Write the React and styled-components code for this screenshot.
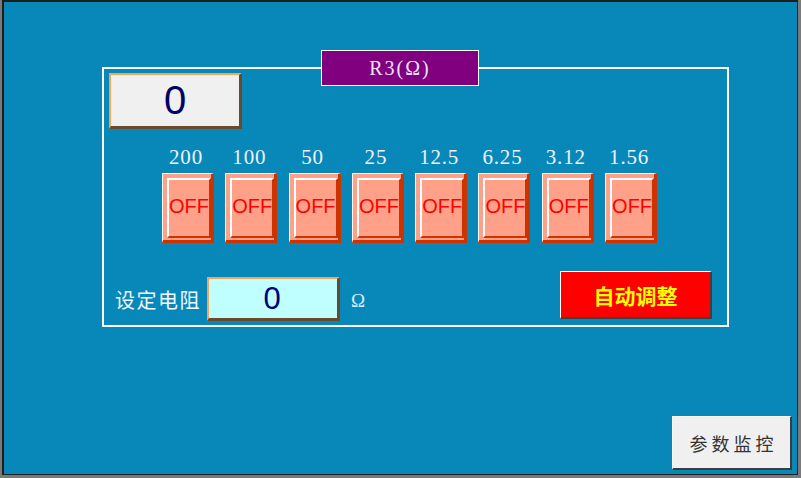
import styled, { createGlobalStyle } from "styled-components";

const GlobalStyle = createGlobalStyle`
  html, body {
    margin: 0;
    padding: 0;
    background: #7a7a7a;
  }
  * {
    box-sizing: border-box;
  }
`;

const weights = ["200", "100", "50", "25", "12.5", "6.25", "3.12", "1.56"];

export default function App() {
  return (
    <>
      <GlobalStyle />
      <Frame>
        <Screen>
          <GroupBox>
            <GroupTitle>R3(Ω)</GroupTitle>
            <ValueDisplay>0</ValueDisplay>
            <SwitchGrid>
              {weights.map((w) => (
                <SwitchCol key={w}>
                  <WeightLabel>{w}</WeightLabel>
                  <ToggleButton>
                    <ToggleFace>OFF</ToggleFace>
                  </ToggleButton>
                </SwitchCol>
              ))}
            </SwitchGrid>
            <BottomRow>
              <SetGroup>
                <SetLabel>设定电阻</SetLabel>
                <SetInput>0</SetInput>
                <Unit>Ω</Unit>
              </SetGroup>
              <AutoButton>自动调整</AutoButton>
            </BottomRow>
          </GroupBox>
          <Footer>
            <MonitorButton>参数监控</MonitorButton>
          </Footer>
        </Screen>
      </Frame>
    </>
  );
}

const Frame = styled.div`
  width: 801px;
  height: 478px;
  padding: 0 3px 3px 2px;
  background: #7a7a7a;
  display: flex;
`;

const Screen = styled.div`
  flex: 1;
  display: flex;
  flex-direction: column;
  background: #0788b8;
  border-style: solid;
  border-color: #1e1e1e;
  border-width: 2px 1px 1px 2px;
`;

const GroupBox = styled.div`
  position: relative;
  width: 627px;
  height: 260px;
  margin: 65px 0 0 98px;
  padding: 4px 0 0 5px;
  border: 2px solid #ffffff;
  display: flex;
  flex-direction: column;
`;

const GroupTitle = styled.div`
  position: absolute;
  left: 217px;
  top: -19px;
  width: 158px;
  height: 36px;
  background: #800080;
  border: 1px solid #ffffff;
  color: #ece4ff;
  font-family: "Liberation Serif", serif;
  font-size: 20px;
  letter-spacing: 2px;
  display: flex;
  align-items: center;
  justify-content: center;
`;

const ValueDisplay = styled.div`
  width: 133px;
  height: 56px;
  background: #f0f0f0;
  border-style: solid;
  border-width: 2px 3px 3px 2px;
  border-color: #f5a55a #6b4a2a #6b4a2a #f5a55a;
  color: #000066;
  font-family: "Liberation Sans", Arial, sans-serif;
  font-size: 40px;
  display: flex;
  align-items: center;
  justify-content: center;
`;

const SwitchGrid = styled.div`
  display: grid;
  grid-template-columns: repeat(8, 52px);
  column-gap: 11.3px;
  margin: 17px 0 0 53px;
`;

const SwitchCol = styled.div`
  display: flex;
  flex-direction: column;
  align-items: center;
`;

const WeightLabel = styled.div`
  height: 22px;
  line-height: 22px;
  margin-left: -4px;
  color: #eef2ff;
  font-family: "Liberation Serif", serif;
  font-size: 21px;
  letter-spacing: 0.8px;
  white-space: nowrap;
`;

const ToggleButton = styled.div`
  width: 52px;
  height: 70px;
  margin-top: 5px;
  padding: 4px 1px 2px 4px;
  background: #ffa088;
  border-style: solid;
  border-width: 1px 3px 3px 1px;
  border-color: #ffffff #cc3300 #cc3300 #ffffff;
  display: flex;
`;

const ToggleFace = styled.div`
  flex: 1;
  border-style: solid;
  border-width: 2px;
  border-color: #ffffff #cc3300 #cc3300 #ffffff;
  color: #ff0000;
  font-family: "Liberation Sans", Arial, sans-serif;
  font-size: 20px;
  display: flex;
  align-items: center;
  justify-content: center;
  padding-bottom: 3px;
`;

const BottomRow = styled.div`
  display: flex;
  align-items: flex-start;
  margin-top: 28px;
`;

const SetGroup = styled.div`
  display: flex;
  align-items: center;
  margin-top: 6px;
`;

const SetLabel = styled.div`
  margin-left: 6px;
  color: #f4f8ff;
  font-family: "Noto Sans CJK SC", sans-serif;
  font-size: 20px;
  letter-spacing: 1.5px;
`;

const SetInput = styled.div`
  width: 133px;
  height: 44px;
  margin-left: 6px;
  background: #c0ffff;
  border-style: solid;
  border-width: 2px 3px 3px 2px;
  border-color: #f5a55a #6b4a2a #6b4a2a #f5a55a;
  color: #000080;
  font-family: "Liberation Sans", Arial, sans-serif;
  font-size: 31px;
  padding-right: 2px;
  display: flex;
  align-items: center;
  justify-content: center;
`;

const Unit = styled.div`
  margin: 4px 0 0 11px;
  color: #d8ecff;
  font-family: "Liberation Serif", serif;
  font-size: 19px;
`;

const AutoButton = styled.div`
  width: 152px;
  height: 48px;
  margin: 0 15px 0 auto;
  background: #ff0000;
  border-style: solid;
  border-width: 1px 2px 2px 1px;
  border-color: #ffffff #404040 #404040 #ffffff;
  color: #ffff00;
  font-family: "Noto Sans CJK SC", sans-serif;
  font-weight: 700;
  font-size: 21px;
  display: flex;
  align-items: center;
  justify-content: center;
`;

const Footer = styled.div`
  margin-top: auto;
  display: flex;
  justify-content: flex-end;
  padding: 0 5px 4px 0;
`;

const MonitorButton = styled.div`
  width: 120px;
  height: 54px;
  background: #f0f0f0;
  border-style: solid;
  border-width: 1px 2px 2px 1px;
  border-color: #f8f8f8 #3c3c3c #3c3c3c #f8f8f8;
  color: #333333;
  font-family: "Noto Sans CJK SC", sans-serif;
  font-size: 18px;
  letter-spacing: 4px;
  padding-left: 4px;
  display: flex;
  align-items: center;
  justify-content: center;
`;
